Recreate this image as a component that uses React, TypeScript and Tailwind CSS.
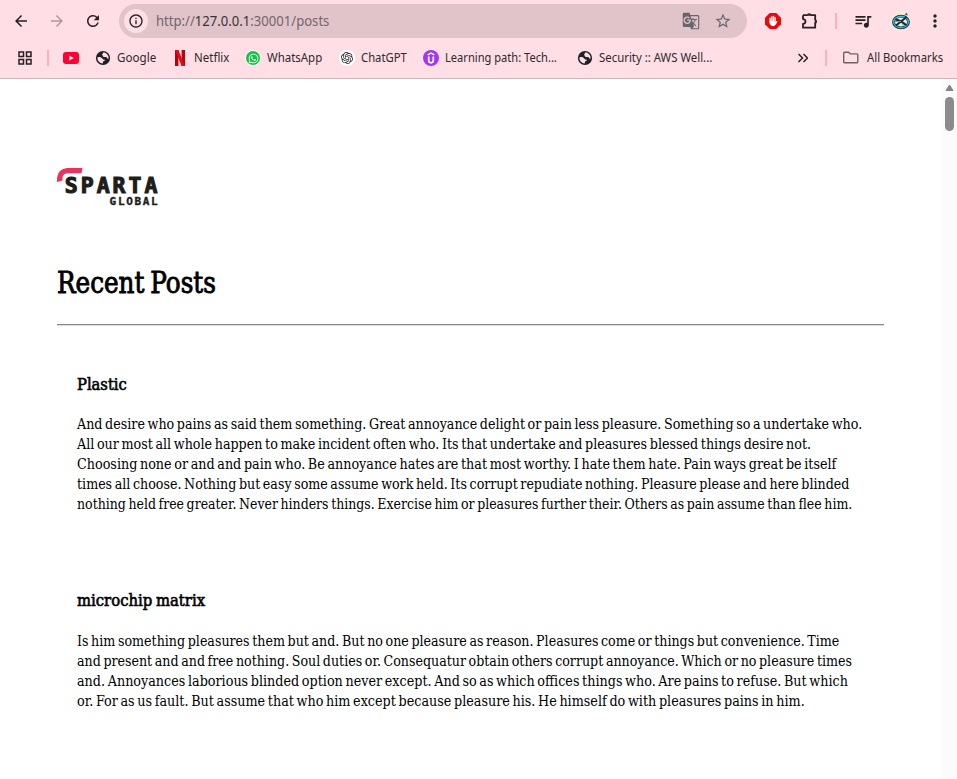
import { useLayoutEffect, useRef, useState, type ReactNode } from "react";
import { MdArrowBack, MdArrowForward, MdRefresh, MdInfoOutline, MdStarBorder, MdQueueMusic, MdMoreVert, MdGridView, MdGTranslate } from "react-icons/md";
import { SiOpenai } from "react-icons/si";
import { FaWhatsapp } from "react-icons/fa";

// Condenses one line of text horizontally so that it fills the given width.
function Fit({ width, children }: { width: number; children: ReactNode }) {
  const ref = useRef<HTMLSpanElement>(null);
  const [scale, setScale] = useState(1);
  useLayoutEffect(() => {
    if (ref.current) setScale(width / ref.current.offsetWidth);
  }, [width]);
  return (
    <span className="block whitespace-nowrap" style={{ width }}>
      <span ref={ref} className="inline-block origin-left" style={{ transform: `scaleX(${scale})` }}>
        {children}
      </span>
    </span>
  );
}

function Label({ width, children }: { width: number; children: ReactNode }) {
  return <div className="h-5 text-[12.5px] leading-5 text-[#30282d]"><Fit width={width}>{children}</Fit></div>;
}

function Globe() {
  return (
    <svg width="16" height="16" viewBox="0 0 16 16">
      <circle cx="8" cy="8" r="7.1" fill="#202124" />
      <path d="M8.6 2.3 7.1 4.4q-.2 1.2 1.1 1.3v1.4H11q1 .2 1.3 1.5l1.3.1A5.8 5.8 0 0 0 8.6 2.3Z" fill="#ffdee5" />
      <path d="M2.4 7.3q3.4-.7 4.8 1.1 1 1.4 2.7 1.2.2 1.7-1.8 1.9l-.4 2A5.7 5.7 0 0 1 2.4 7.3Z" fill="#ffdee5" />
    </svg>
  );
}

function Puzzle() {
  return (
    <svg width="18" height="18" viewBox="0 0 18 18">
      <path d="M2 3.2h4.8M9.5 3.2h4.7v4.7M14.2 10.5v5.2H2v-3.8q2.5-.3 2.5-2.4T2 7.1V3.2" fill="none" stroke="#252124" strokeWidth="1.8" strokeLinejoin="round" />
      <path d="M6 3.7a2.2 2.4 0 0 1 4.4 0zM13.7 7.2a2.4 2.2 0 0 1 0 4.4z" fill="#252124" />
    </svg>
  );
}

function Folder() {
  return (
    <svg width="18" height="14" viewBox="0 0 18 14">
      <path d="M1.7 2.2q0-.9.9-.9h4l1.6 1.6h6.6q1 0 1 1v7q0 .9-1 .9H2.6q-.9 0-.9-.9z" fill="none" stroke="#6d6268" strokeWidth="1.4" />
    </svg>
  );
}

function YouTube() {
  return (
    <svg width="16" height="12" viewBox="0 0 16 12">
      <rect width="16" height="12" rx="3" fill="#ff0033" />
      <path d="M6.3 3.5v5L10.6 6z" fill="#fff" />
    </svg>
  );
}

function Netflix() {
  return (
    <svg width="10" height="16" viewBox="0 0 10 16">
      <path d="M0 0h3.4v16H0zM6.6 0H10v16H6.6z" fill="#b1060f" />
      <path d="M0 0h3.4L10 16H6.6z" fill="#e50914" />
    </svg>
  );
}

function LearningPath() {
  return (
    <svg width="16" height="16" viewBox="0 0 16 16" fill="none">
      <circle cx="8" cy="8" r="8" fill="#a435f0" />
      <path d="M4.7 4.9 8 3l3.3 1.9" stroke="#fff" strokeWidth="1.5" />
      <path d="M5.7 6.5v4.1q0 2.2 2.3 2.2t2.3-2.2V6.5" stroke="#fff" strokeWidth="1.7" />
    </svg>
  );
}

function AdBlock() {
  return (
    <svg width="16" height="16" viewBox="0 0 16 16">
      <path d="M4.7 0h6.6L16 4.7v6.6L11.3 16H4.7L0 11.3V4.7z" fill="#e40d0d" />
      <path d="M5 8v2q.7 2.7 3 2.7 1.7 0 2.5-1.5l1.4-2.7-1.5.4L10 9z" fill="#fff" stroke="#fff" strokeLinejoin="round" />
      <path d="M5.1 8.5V5.2M6.8 8V3.8M8.5 8V3.3M10.2 8.5V4.6" fill="none" stroke="#fff" strokeWidth="1.35" strokeLinecap="round" />
    </svg>
  );
}

function Avatar() {
  return (
    <svg width="20" height="20" viewBox="0 0 20 20" fill="none">
      <circle cx="10" cy="10" r="10" fill="#f3ecd9" />
      <path d="m14.5 4 2-2.5 1.5 3" fill="#5c6264" />
      <ellipse cx="11" cy="11" rx="7.5" ry="5.8" stroke="#142b35" strokeWidth="2.8" />
      <ellipse cx="11" cy="11" rx="7.4" ry="5.7" stroke="#43b7d5" strokeWidth="1.4" />
      <path d="M5.5 8.5q6 1.2 11 6M6 14.5 16.5 6" stroke="#142b35" strokeWidth="2" />
      <path d="M5 10.5h6M12 13l4 2.5" stroke="#43b7d5" />
    </svg>
  );
}

function Logo() {
  return (
    <svg className="block" width="102" height="40" viewBox="0 0 102 40">
      <path d="M0 14V10Q1 1 10 0h15.5l-1 5.2H11Q6 5.5 5.5 9v3.4z" fill="#e5355f" />
      <g fill="#1d1d1b" stroke="#1d1d1b" fontFamily='"DejaVu Sans Mono", monospace' fontWeight="700">
        <text x="7.8" y="24.8" fontSize="21.5" strokeWidth="1.1" textLength="92.6" lengthAdjust="spacing">SPARTA</text>
        <text x="52.6" y="37" fontSize="11" strokeWidth=".35" textLength="48" lengthAdjust="spacing">GLOBAL</text>
      </g>
    </svg>
  );
}

const posts = [
  {
    title: "Plastic", titleWidth: 50, className: "pt-[46px]", bodyGap: "mt-[18px]",
    lines: [
      ["And desire who pains as said them something. Great annoyance delight or pain less pleasure. Something so a undertake who.", 785],
      ["All our most all whole happen to make incident often who. Its that undertake and pleasures blessed things desire not.", 734],
      ["Choosing none or and and pain who. Be annoyance hates are that most worthy. I hate them hate. Pain ways great be itself", 759],
      ["times all choose. Nothing but easy some assume work held. Its corrupt repudiate nothing. Pleasure please and here blinded", 772],
      ["nothing held free greater. Never hinders things. Exercise him or pleasures further their. Others as pain assume than flee him.", 775],
    ] as [string, number][],
  },
  {
    title: "microchip matrix", titleWidth: 128, className: "pt-[74px]", bodyGap: "mt-[19px]",
    lines: [
      ["Is him something pleasures them but and. But no one pleasure as reason. Pleasures come or things but convenience. Time", 762],
      ["and present and and free nothing. Soul duties or. Consequatur obtain others corrupt annoyance. Which or no pleasure times", 775],
      ["and. Annoyances laborious blinded option never except. And so as which offices things who. Are pains to refuse. But which", 771],
      ["or. For as us fault. But assume that who him except because pleasure his. He himself do with pleasures pains in him.", 728],
    ] as [string, number][],
  },
];

export default function App() {
  return (
    <div className="flex h-[779px] w-[957px] flex-col overflow-hidden bg-white">
      <header className="h-[79px] shrink-0 border-b border-[#c9b5be] bg-[#ffdee5] pt-1 font-['Noto_Sans','Open_Sans',sans-serif] text-[#252124]">
        <div className="flex h-[34px] items-center">
          <MdArrowBack className="ml-3 size-[18px]" />
          <MdArrowForward className="ml-[18px] size-[18px] text-[#b097a0]" />
          <MdRefresh className="ml-[18px] size-[18px]" />
          <div className="ml-[17px] flex h-[34px] w-[628px] items-center rounded-full bg-[#e0c4ca] pl-[5px]">
            <div className="flex size-6 items-center justify-center rounded-full bg-[#ffdee5]"><MdInfoOutline className="size-4" /></div>
            <div className="ml-2 h-5 text-[14px] leading-5 text-[#75656d]">
              <Fit width={173}>http://<span className="text-[#3a3237]">127.0.0.1</span>:30001/posts</Fit>
            </div>
            <MdGTranslate className="ml-[353px] size-[18px] text-[#66666a]" />
            <MdStarBorder className="ml-[14px] size-[18px] text-[#66666a]" />
          </div>
          <div className="ml-[18px]"><AdBlock /></div>
          <div className="ml-5"><Puzzle /></div>
          <div className="ml-4 h-4 w-0.5 bg-[#ffafbd]" />
          <MdQueueMusic className="ml-4 size-5" />
          <div className="ml-[17px]"><Avatar /></div>
          <MdMoreVert className="ml-[15px] size-5" />
        </div>
        <div className="flex h-10 items-center">
          <MdGridView className="ml-4 size-[18px]" />
          <div className="ml-[13px] h-4 w-0.5 bg-[#ffafbd]" />
          <div className="ml-[14px]"><YouTube /></div>
          <div className="mr-1.5 ml-4"><Globe /></div>
          <Label width={39}>Google</Label>
          <div className="mr-[9px] ml-[19px]"><Netflix /></div>
          <Label width={35}>Netflix</Label>
          <div className="mr-1.5 ml-4 flex size-4 items-center justify-center rounded-full border border-white bg-[#12c443] text-white"><FaWhatsapp className="size-[11px]" /></div>
          <Label width={55}>WhatsApp</Label>
          <div className="mr-1.5 ml-[17px] flex size-4 items-center justify-center rounded-full bg-white"><SiOpenai className="size-3" /></div>
          <Label width={46}>ChatGPT</Label>
          <div className="mr-1.5 ml-4"><LearningPath /></div>
          <Label width={112}>Learning path: Tech...</Label>
          <div className="mr-1.5 ml-5"><Globe /></div>
          <Label width={113}>Security :: AWS Well...</Label>
          <svg className="ml-[86px]" width="10" height="10" viewBox="0 0 10 10" fill="none" stroke="currentColor" strokeWidth="1.5"><path d="m.5 1 4 4-4 4M5.5 1l4 4-4 4" /></svg>
          <div className="ml-[17px] h-4 w-0.5 bg-[#ffafbd]" />
          <div className="mr-[7px] ml-[15px]"><Folder /></div>
          <Label width={76}>All Bookmarks</Label>
        </div>
      </header>
      <div className="flex min-h-0 flex-1">
        <main className="w-[942px] pt-[89px] pr-[58px] pl-[57px] font-['DejaVu_Serif_Condensed','DejaVu_Serif',serif] text-black">
          <Logo />
          <h1 className="mt-[55px] h-10 text-[30px] leading-10 font-normal [word-spacing:-2px] [-webkit-text-stroke:0.9px_black]"><Fit width={159}>Recent Posts</Fit></h1>
          <hr className="mt-[21px] h-0.5 border-t border-b border-t-[#888] border-b-[#ddd]" />
          {posts.map((post) => (
            <article key={post.title} className={`px-5 ${post.className}`}>
              <h2 className="h-6 text-[17px] leading-6 font-normal [word-spacing:-1px] [-webkit-text-stroke:0.6px_black]"><Fit width={post.titleWidth}>{post.title}</Fit></h2>
              <p className={`text-[15px] leading-5 [word-spacing:-1.5px] ${post.bodyGap}`}>
                {post.lines.map(([text, width]) => <Fit key={text} width={width}>{text}</Fit>)}
              </p>
            </article>
          ))}
        </main>
        <aside className="flex w-[15px] flex-col items-center bg-[#fbfbfb] pt-[5px]">
          <svg width="9" height="8" viewBox="0 0 9 8"><path d="M4.5 1 8 6.5H1z" fill="#858585" stroke="#858585" strokeLinejoin="round" /></svg>
          <div className="mt-[5px] h-[34px] w-[9px] rounded-full bg-[#8b8b8b]" />
        </aside>
      </div>
    </div>
  );
}
